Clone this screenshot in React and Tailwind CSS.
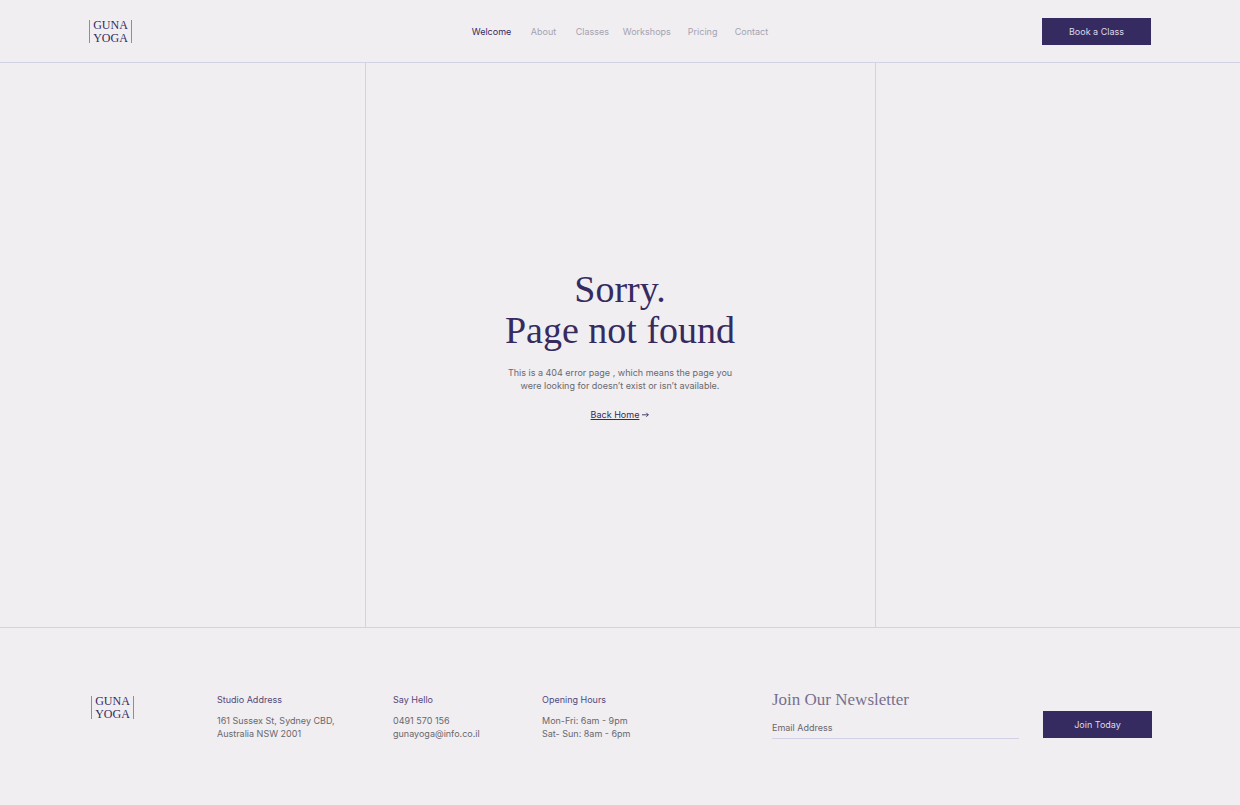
const navItems = ["Welcome", "About", "Classes", "Workshops", "Pricing", "Contact"];

const infoColumns = [
  { title: "Studio Address", lines: ["161 Sussex St, Sydney CBD,", "Australia NSW 2001"] },
  { title: "Say Hello", lines: ["0491 570 156", "gunayoga@info.co.il"] },
  { title: "Opening Hours", lines: ["Mon-Fri: 6am - 9pm", "Sat- Sun: 8am - 6pm"] },
];

function Logo() {
  return (
    <a
      href="#"
      className="flex w-[43px] flex-col items-center justify-center border-x border-[#8f8aa9] font-['Liberation_Serif',serif] text-[12px] leading-[13px] text-[#352b5f]"
    >
      <span className="-mt-px">GUNA</span>
      <span className="-mb-[2px]">YOGA</span>
    </a>
  );
}

export default function App() {
  return (
    <div className="flex min-h-screen flex-col bg-[#f0eef1] font-['Inter','Noto_Sans',sans-serif] text-[9px] leading-[13px] text-[#6a686e]">
      <header className="grid h-[63px] grid-cols-[1fr_auto_1fr] items-center border-b border-[#d3d1e6] px-[89px]">
        <Logo />
        <nav className="grid grid-cols-[59px_45px_47px_65px_47px_auto]">
          {navItems.map((item, i) => (
            <a key={item} href="#" className={i === 0 ? "text-[#352b5f]" : "text-[#a5a2b0]"}>
              {item}
            </a>
          ))}
        </nav>
        <button className="h-[27px] w-[109px] justify-self-end bg-[#352b60] text-[#dedaea]">
          Book a Class
        </button>
      </header>

      <main className="grid flex-1 grid-cols-[1fr_511px_1fr] border-b border-[#d3d1e6]">
        <div className="col-start-2 flex flex-col items-center justify-center border-x border-[#d3d1e6] text-center">
          <h1 className="font-['Liberation_Serif',serif] text-[38px] leading-[41px] text-[#352b5f]">
            Sorry.
            <br />
            Page not found
          </h1>
          <p className="mt-[15px]">
            This is a 404 error page , which means the page you
            <br />
            were looking for doesn’t exist or isn’t available.
          </p>
          <a href="#" className="mt-4 flex items-center gap-[3px] text-[#352b5f]">
            <span className="underline underline-offset-1">Back Home</span>
            <svg width="7" height="7" viewBox="0 0 7 7" fill="none" stroke="currentColor" strokeWidth="0.9" aria-hidden="true">
              <path d="M0 3.8H6.3M4.3 1.8L6.3 3.8L4.3 5.8" />
            </svg>
          </a>
        </div>
      </main>

      <footer className="grid h-[177px] grid-cols-[126fr_176fr_149fr_230fr_380fr] pr-[88px] pl-[91px] pt-16">
        <div className="pt-1">
          <Logo />
        </div>
        {infoColumns.map((column) => (
          <section key={column.title} className="pt-px">
            <h2 className="mb-2 text-[#51487a]">{column.title}</h2>
            {column.lines.map((line) => (
              <p key={line} className="whitespace-nowrap">{line}</p>
            ))}
          </section>
        ))}
        <form className="flex items-end gap-6 self-start" onSubmit={(e) => e.preventDefault()}>
          <div className="flex min-w-0 flex-1 flex-col">
            <label htmlFor="email" className="font-['Liberation_Serif',serif] text-[17px] leading-4 text-[#77708f]">
              Join Our Newsletter
            </label>
            <input
              id="email"
              type="email"
              placeholder="Email Address"
              className="mt-2 h-[23px] w-full border-b border-[#d3d1e6] bg-transparent outline-none placeholder:text-[#6a686e]"
            />
          </div>
          <button className="mb-px h-[27px] w-[109px] bg-[#352b60] text-[#dedaea]">Join Today</button>
        </form>
      </footer>
    </div>
  );
}
